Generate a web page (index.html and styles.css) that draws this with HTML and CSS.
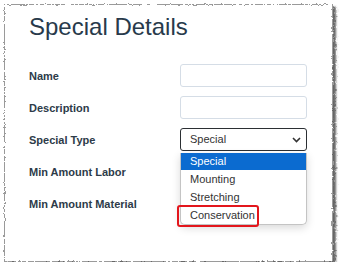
FILE: index.html
```html
<!DOCTYPE html>
<html lang="en">
<head>
    <meta charset="UTF-8">
    <meta name="viewport" content="width=device-width, initial-scale=1.0">
    <title>Special Details</title>
    <link rel="stylesheet" href="styles.css">
</head>
<body>
    <svg class="defs" width="0" height="0" aria-hidden="true">
        <filter id="torn">
            <feTurbulence type="fractalNoise" baseFrequency="0.35" numOctaves="2" seed="3" result="noise"/>
            <feDisplacementMap in="SourceGraphic" in2="noise" scale="3" xChannelSelector="R" yChannelSelector="G"/>
        </filter>
    </svg>

    <div class="sheet">
        <h1 class="title">Special Details</h1>

        <div class="form">
            <label for="name">Name</label>
            <input type="text" id="name">

            <label for="description">Description</label>
            <input type="text" id="description">

            <label for="specialType">Special Type</label>
            <div class="select-wrap">
                <div id="specialType" class="select">Special</div>
                <svg class="chevron" width="9" height="6" viewBox="0 0 9 6">
                    <polyline points="1,1 4.5,4.5 8,1" fill="none" stroke="#333" stroke-width="1.6"/>
                </svg>
                <ul class="dropdown">
                    <li class="selected">Special</li>
                    <li>Mounting</li>
                    <li>Stretching</li>
                    <li>Conservation</li>
                </ul>
                <span class="callout"></span>
            </div>

            <label for="minLabor">Min Amount Labor</label>
            <input type="text" id="minLabor">

            <label for="minMaterial">Min Amount Material</label>
            <input type="text" id="minMaterial">
        </div>
    </div>
</body>
</html>
```

FILE: styles.css
```css
body {
    margin: 0;
    background: white;
    font-family: 'Liberation Sans', Arial, sans-serif;
}

.defs {
    position: absolute;
}

.sheet {
    position: relative;
    margin: 4px 0 0 4px;
    width: 329px;
    height: 258px;
    padding: 9px 0 0 25px;
    box-sizing: border-box;
    z-index: 0;
}

.sheet::before {
    content: '';
    position: absolute;
    inset: 0;
    background: white;
    border: 1px solid #9a9a9a;
    box-shadow: 3px 3px 2px rgba(0,0,0,0.6);
    filter: url(#torn);
    z-index: -1;
}

.title {
    margin: 0;
    font-size: 24px;
    line-height: 28px;
    font-weight: normal;
    color: #283a4b;
}

.form {
    margin-top: 23px;
    display: grid;
    grid-template-columns: 151px 127px;
    grid-auto-rows: 23px;
    row-gap: 9px;
    align-items: center;
}

.form label {
    font-size: 11px;
    font-weight: bold;
    color: #2d3b49;
}

.form input {
    box-sizing: border-box;
    width: 127px;
    height: 23px;
    margin: 0;
    border: 1px solid #d5dde6;
    border-radius: 3px;
    background: white;
}

.select-wrap {
    position: relative;
    height: 23px;
    z-index: 2;
}

.select {
    box-sizing: border-box;
    height: 23px;
    border: 1.5px solid #2b2f33;
    border-radius: 3px;
    padding-left: 9px;
    font-size: 11px;
    line-height: 20px;
    color: #333;
}

.chevron {
    position: absolute;
    right: 6px;
    top: 9px;
}

.dropdown {
    position: absolute;
    top: 25px;
    left: 0;
    width: 127px;
    margin: 0;
    padding: 0;
    list-style: none;
    box-sizing: border-box;
    background: white;
    border: 1px solid #c4c4c4;
    border-top: none;
    border-radius: 0 0 5px 5px;
    box-shadow: 0 3px 8px rgba(0,0,0,0.15);
}

.dropdown li {
    height: 18px;
    padding-left: 9px;
    font-size: 11px;
    line-height: 18px;
    color: #333;
}

.dropdown li.selected {
    background: #0b6bd0;
    color: white;
    height: 17px;
    line-height: 17px;
}

.callout {
    position: absolute;
    left: -3px;
    top: 77px;
    width: 82px;
    height: 22px;
    box-sizing: border-box;
    border: 2px solid #e3161c;
    border-radius: 3px;
}
```
